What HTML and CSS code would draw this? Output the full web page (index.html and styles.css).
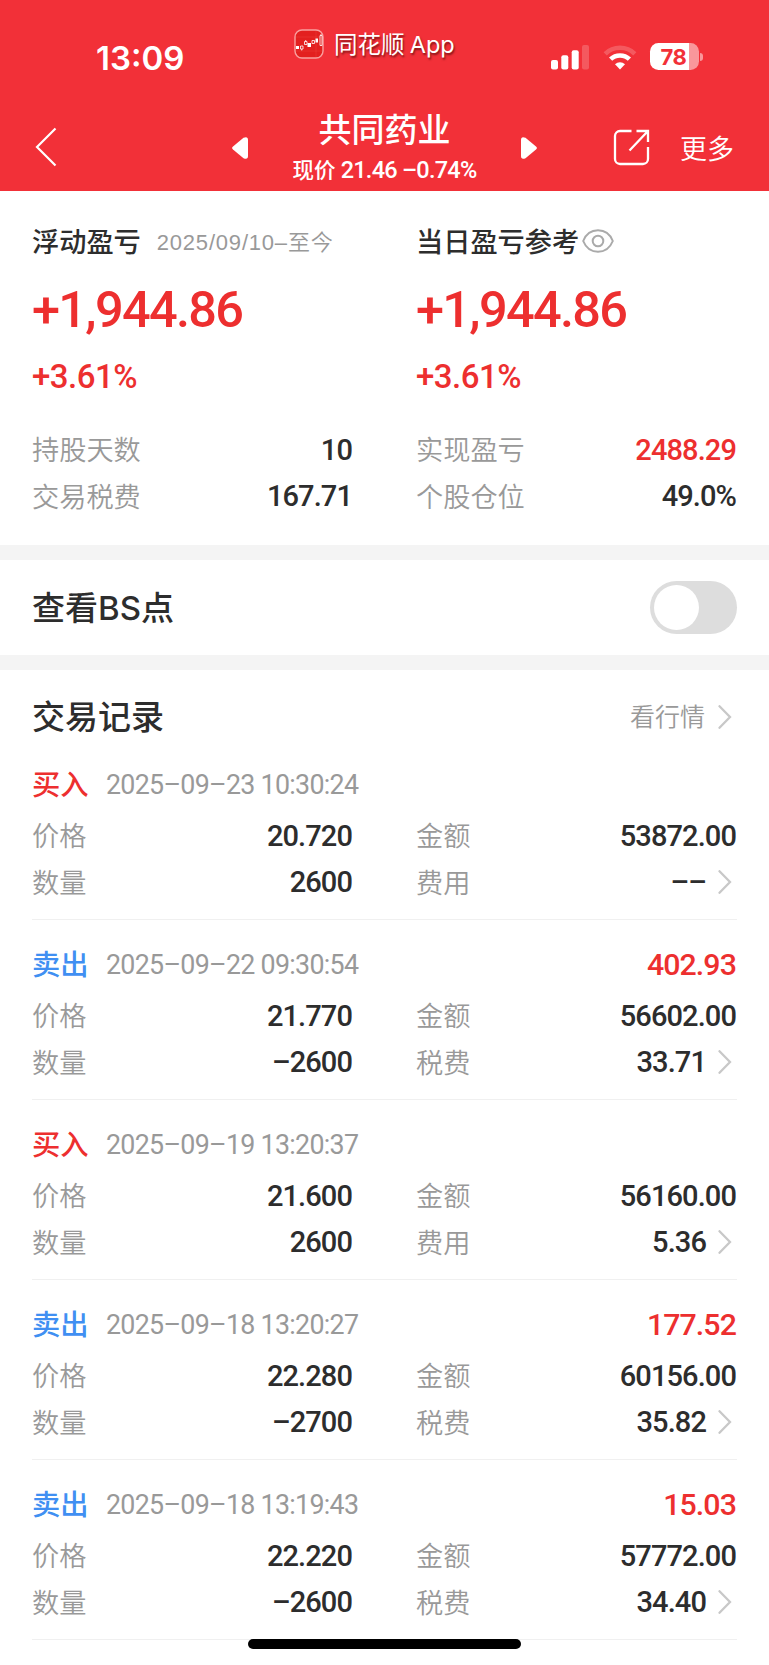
FILE: index.html
```
<!DOCTYPE html>
<html lang="zh-CN">

<head>
    <meta charset="UTF-8">
    <title>共同药业 – 交易记录</title>
    <link rel="stylesheet" href="styles.css">
</head>

<body>
    <svg width="0" height="0" class="sprite">
        <symbol id="chevron" viewBox="0 0 14 24">
            <path d="M1.5 1.2 12 12 1.5 22.8" fill="none" stroke="#c8c8c8" stroke-width="2.3" stroke-linecap="round" />
        </symbol>
    </svg>

    <header class="top">
        <div class="statusbar">
            <span class="time">13:09</span>
            <div class="brand">
                <svg width="30" height="30" viewBox="0 0 30 30">
                    <rect x="1" y="1" width="28" height="28" rx="7" fill="#e3201f" stroke="#f9a09f" stroke-width="1.4" />
                    <path d="M2 8h26M2 22h26M22 2v26" stroke="#ef4a45" stroke-width=".4" />
                    <path d="M2 17h3v3H2zM13.5 14H17v4h-3.500zM21.500 9.500H24v4h-2.500z" fill="#fff" />
                    <path d="M6.500 17H9v3H6.500zM10.500 12.500H13v3h-2.500zM18 11.500h2.500v3H18zM26 6.500h2v10h-2zM11.700 11v1.500M27 5v1.500M7.700 20v1.500" fill="none" stroke="#fff" stroke-width=".8" />
                </svg>
                <span>同花顺 <i>App</i></span>
            </div>
            <div class="signals">
                <svg width="39" height="25" viewBox="0 0 39 25" fill="#fff">
                    <rect x="0" y="15" width="7" height="9.5" rx="2" />
                    <rect x="10.3" y="10.3" width="7" height="14.2" rx="2" />
                    <rect x="20.7" y="5.2" width="7" height="19.3" rx="2" />
                    <rect x="31" y="0" width="7" height="24.5" rx="2" opacity=".2" />
                </svg>
                <svg width="34" height="25" viewBox="0 0 34 25" fill="none" stroke="#fff" stroke-width="4.6">
                    <path d="M2.200 8.800a21.300 21.300 0 0 1 29.600 0" opacity=".2" />
                    <path d="M7.600 14.200a13.600 13.600 0 0 1 18.800 0" />
                    <path d="M17 24.500l-5-5.200a7.200 7.200 0 0 1 10 0z" fill="#fff" stroke="none" />
                </svg>
                <div class="battery"><span>78</span></div>
            </div>
        </div>

        <nav class="navbar">
            <svg class="back" width="22" height="40" viewBox="0 0 22 40">
                <path d="M20.500 1.500 2 20l18.500 18.500" fill="none" stroke="#fff" stroke-width="2.200" />
            </svg>
            <div class="stock">
                <svg width="16" height="22" viewBox="0 0 16 22">
                    <path d="M1 9.500 11.500.8Q16-1 16 3v16q0 4-4.500 2.200L1 12.500q-1.800-1.500 0-3z" fill="#fff" />
                </svg>
                <div class="stock-name">
                    <h1>共同药业</h1>
                    <p><span>现价</span> 21.46 –0.74%</p>
                </div>
                <svg width="16" height="22" viewBox="0 0 16 22">
                    <path d="M15 9.500 4.500.8Q0-1 0 3v16q0 4 4.500 2.200L15 12.500q1.800-1.500 0-3z" fill="#fff" />
                </svg>
            </div>
            <svg class="share" width="37" height="37" viewBox="0 0 37 37" fill="none" stroke="#fff" stroke-width="2.300">
                <path d="M18.500 2H7a5 5 0 0 0-5 5v23a5 5 0 0 0 5 5h23a5 5 0 0 0 5-5V18" />
                <path d="M23.500 2H35v11M35 2 16.500 21.500" />
            </svg>
            <span class="more">更多</span>
        </nav>
    </header>

    <section class="summary">
        <div class="column">
            <h2><span>浮动盈亏</span> <small>2025/09/10–至今</small></h2>
            <div class="profit">+1,944.86</div>
            <div class="percent">+3.61%</div>
            <div class="row"><label>持股天数</label><b>10</b></div>
            <div class="row"><label>交易税费</label><b>167.71</b></div>
        </div>
        <div class="column">
            <h2><span>当日盈亏参考</span>
                <svg width="32" height="24" viewBox="0 0 32 24" fill="none" stroke="#aaa" stroke-width="2">
                    <path d="M1.200 12C4 5 9.500 1.300 16 1.300S28 5 30.800 12C28 19 22.500 22.700 16 22.700S4 19 1.200 12z" />
                    <circle cx="16" cy="12" r="5.300" />
                </svg>
            </h2>
            <div class="profit">+1,944.86</div>
            <div class="percent">+3.61%</div>
            <div class="row"><label>实现盈亏</label><b class="red">2488.29</b></div>
            <div class="row"><label>个股仓位</label><b>49.0%</b></div>
        </div>
    </section>

    <section class="bs">
        <h3>查看BS点</h3>
        <div class="switch"></div>
    </section>

    <section class="records">
        <div class="records-head">
            <h3>交易记录</h3>
            <a><span>看行情</span><svg class="chevron"><use href="#chevron" /></svg></a>
        </div>

        <article class="record">
            <div class="record-head"><span class="buy">买入</span><time>2025–09–23 10:30:24</time></div>
            <div class="row"><label>价格</label><b>20.720</b></div>
            <div class="row"><label>金额</label><b>53872.00</b></div>
            <div class="row"><label>数量</label><b>2600</b></div>
            <div class="row"><label>费用</label><b>––</b><svg class="chevron"><use href="#chevron" /></svg></div>
        </article>

        <article class="record">
            <div class="record-head"><span class="sell">卖出</span><time>2025–09–22 09:30:54</time><b class="red">402.93</b></div>
            <div class="row"><label>价格</label><b>21.770</b></div>
            <div class="row"><label>金额</label><b>56602.00</b></div>
            <div class="row"><label>数量</label><b>–2600</b></div>
            <div class="row"><label>税费</label><b>33.71</b><svg class="chevron"><use href="#chevron" /></svg></div>
        </article>

        <article class="record">
            <div class="record-head"><span class="buy">买入</span><time>2025–09–19 13:20:37</time></div>
            <div class="row"><label>价格</label><b>21.600</b></div>
            <div class="row"><label>金额</label><b>56160.00</b></div>
            <div class="row"><label>数量</label><b>2600</b></div>
            <div class="row"><label>费用</label><b>5.36</b><svg class="chevron"><use href="#chevron" /></svg></div>
        </article>

        <article class="record">
            <div class="record-head"><span class="sell">卖出</span><time>2025–09–18 13:20:27</time><b class="red">177.52</b></div>
            <div class="row"><label>价格</label><b>22.280</b></div>
            <div class="row"><label>金额</label><b>60156.00</b></div>
            <div class="row"><label>数量</label><b>–2700</b></div>
            <div class="row"><label>税费</label><b>35.82</b><svg class="chevron"><use href="#chevron" /></svg></div>
        </article>

        <article class="record">
            <div class="record-head"><span class="sell">卖出</span><time>2025–09–18 13:19:43</time><b class="red">15.03</b></div>
            <div class="row"><label>价格</label><b>22.220</b></div>
            <div class="row"><label>金额</label><b>57772.00</b></div>
            <div class="row"><label>数量</label><b>–2600</b></div>
            <div class="row"><label>税费</label><b>34.40</b><svg class="chevron"><use href="#chevron" /></svg></div>
        </article>
    </section>

    <div class="home-bar"></div>
</body>

</html>
```

FILE: styles.css
```
* {
    box-sizing: border-box;
}

body {
    margin: 0;
    height: 1665px;
    overflow: hidden;
    background: #fff;
    color: #2d2d2d;
    font-family: Roboto, "Noto Sans CJK SC", sans-serif;
    white-space: nowrap;
}

h1,
h2,
h3,
p {
    margin: 0;
    font-weight: 500;
}

svg {
    display: block;
    flex: none;
}

.sprite {
    position: absolute;
}

/* red header */
.top {
    height: 191px;
    background: #f23038;
    color: #fff;
}

.statusbar {
    display: flex;
    height: 100px;
    padding-left: 96px;
}

.time {
    width: 198px;
    padding-top: 38px;
    font: 600 33px/40px Inter, sans-serif;
}

.brand {
    display: flex;
    width: 257px;
    padding-top: 29px;
    gap: 10px;
    font: 400 23.5px/29px "Noto Sans CJK SC", sans-serif;
    text-shadow: 1px 2px 2px rgba(60, 0, 0, .6);
}

.brand i {
    font-family: Inter, sans-serif;
    font-style: normal;
}

.signals {
    display: flex;
    padding-top: 45px;
}

.signals svg + svg {
    margin-left: 13px;
}

.battery {
    position: relative;
    width: 49px;
    height: 27px;
    margin: -2px 0 0 13px;
    padding-right: 2px;
    border-radius: 8.5px;
    background: linear-gradient(90deg, #fff 39px, #f9979b 39px);
    color: #f23038;
    font: 700 22px/28px Inter, sans-serif;
    text-align: center;
    letter-spacing: -0.5px;
}

.battery::after {
    content: "";
    position: absolute;
    right: -4px;
    top: 10px;
    width: 3px;
    height: 8px;
    border-radius: 0 3px 3px 0;
    background: #f9979b;
}

.navbar {
    display: flex;
    height: 91px;
    padding-left: 35px;
}

.back {
    margin-top: 27px;
}

.stock {
    display: flex;
    width: 305px;
    margin-left: 175px;
    justify-content: space-between;
}

.stock svg {
    margin-top: 37px;
}

.stock-name {
    text-align: center;
}

.stock h1 {
    height: 56px;
    font-size: 33px;
    line-height: 62px;
}

.stock p {
    font-size: 23.5px;
    line-height: 28px;
    letter-spacing: -0.75px;
}

.stock p span {
    font-size: 21.5px;
    letter-spacing: 0;
}

.share {
    margin: 29px 0 0 76px;
}

.more {
    margin-left: 30px;
    font: 350 27px/95px "Noto Sans CJK SC", sans-serif;
}

/* profit summary */
.summary {
    display: grid;
    grid-template-columns: 1fr 1fr;
    column-gap: 63px;
    height: 369px;
    padding: 28px 32px 0;
    border-bottom: 15px solid #f4f4f4;
}

h2 {
    display: flex;
    height: 46px;
    align-items: center;
    font-size: 27.2px;
}

h2 span,
h2 small,
label,
h3,
.records-head span,
.record-head span {
    padding-bottom: 4px;
}

h2 small {
    margin-left: 16px;
    font: 350 22px "Liberation Sans", "Noto Sans CJK SC", sans-serif;
    letter-spacing: 0.8px;
    color: #999;
}

h2 svg {
    margin: -2px 0 0 3px;
}

.profit,
.percent,
.red,
.buy {
    color: #ed2f2f;
}

.profit {
    height: 88px;
    font-size: 50.5px;
    font-weight: 500;
    line-height: 90px;
    letter-spacing: -1.7px;
}

.percent {
    height: 74px;
    font-size: 33px;
    font-weight: 500;
    line-height: 48px;
    letter-spacing: -0.5px;
}

.row {
    display: flex;
    height: 46.5px;
    align-items: center;
}

label {
    font-size: 27.2px;
    font-weight: 350;
    color: #999;
}

b {
    margin: -1px 1px 0 auto;
    font-size: 29px;
    font-weight: 500;
    letter-spacing: -0.9px;
}

b.red {
    color: #ed2f2f;
}

/* BS switch */
.bs {
    display: flex;
    height: 110px;
    padding: 0 32px;
    align-items: center;
    justify-content: space-between;
    border-bottom: 15px solid #f4f4f4;
}

h3 {
    font-family: Inter, "Noto Sans CJK SC", sans-serif;
    font-size: 33px;
}

.switch {
    width: 87px;
    height: 53px;
    padding: 4px;
    border-radius: 27px;
    background: #ddd;
}

.switch::before {
    content: "";
    display: block;
    width: 45px;
    height: 45px;
    border-radius: 50%;
    background: #fff;
}

/* trade records */
.records {
    padding: 0 32px;
}

.records-head {
    display: flex;
    height: 70px;
    padding-top: 24px;
    align-items: center;
    justify-content: space-between;
}

.records-head a {
    display: flex;
    align-items: center;
    font-size: 25px;
    font-weight: 350;
    color: #999;
}

.chevron {
    width: 14px;
    height: 24px;
    margin: -1px 5px 0 13px;
}

.row b + .chevron {
    margin-left: 11px;
}

.record {
    display: grid;
    grid-template-columns: 1fr 1fr;
    grid-template-rows: 53px 46.5px 46.5px;
    column-gap: 63px;
    height: 180px;
    padding-top: 20px;
    border-bottom: 1px solid #f0f0f0;
}

.record-head {
    display: flex;
    grid-column: span 2;
    height: 49px;
    align-items: center;
}

.record-head span {
    width: 74px;
    font-size: 28.3px;
    font-weight: 500;
}

.record-head time {
    font-size: 26.8px;
    color: #999;
    letter-spacing: -0.7px;
}

.record-head b {
    font-size: 30.3px;
}

.sell {
    color: #408ff2;
}

.home-bar {
    position: fixed;
    left: 248px;
    bottom: 16px;
    width: 273px;
    height: 10px;
    border-radius: 5px;
    background: #000;
}
```
